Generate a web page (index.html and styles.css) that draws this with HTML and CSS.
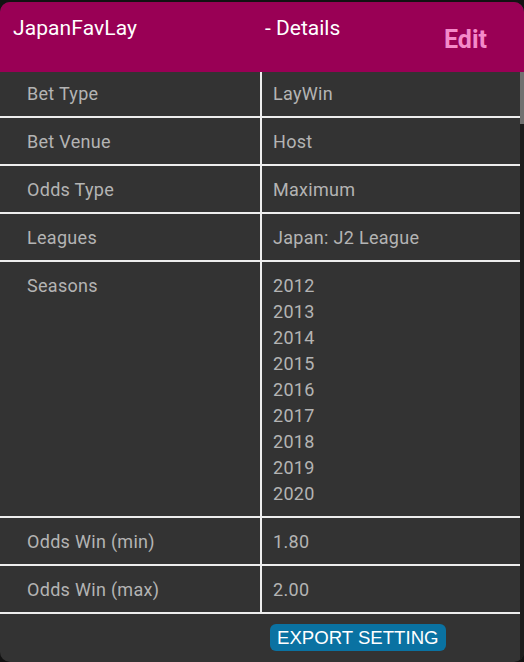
FILE: index.html
```html
<!DOCTYPE html>
<html lang="en">
<head>
  <meta charset="UTF-8" />
  <meta name="viewport" content="width=device-width, initial-scale=1.0"/>
  <title>JapanFavLay - Details</title>
  <link rel="stylesheet" href="styles.css">
</head>
<body>

  <div class="card">
    <!-- Header -->
    <div class="header">
      <div class="title">JapanFavLay</div>
      <div class="subtitle">- Details</div>
      <div class="edit">Edit</div>
    </div>

    <div class="content">
      <div class="table">
        <div class="row first">
          <div class="cell label">Bet Type</div>
          <div class="cell value">LayWin</div>
        </div>
        <div class="row">
          <div class="cell label">Bet Venue</div>
          <div class="cell value">Host</div>
        </div>
        <div class="row">
          <div class="cell label">Odds Type</div>
          <div class="cell value">Maximum</div>
        </div>
        <div class="row">
          <div class="cell label">Leagues</div>
          <div class="cell value">Japan: J2 League</div>
        </div>
        <div class="row">
          <div class="cell label">Seasons</div>
          <div class="cell value">
            <div>2012</div>
            <div>2013</div>
            <div>2014</div>
            <div>2015</div>
            <div>2016</div>
            <div>2017</div>
            <div>2018</div>
            <div>2019</div>
            <div>2020</div>
          </div>
        </div>
        <div class="row">
          <div class="cell label">Odds Win (min)</div>
          <div class="cell value">1.80</div>
        </div>
        <div class="row">
          <div class="cell label">Odds Win (max)</div>
          <div class="cell value">2.00</div>
        </div>

        <div class="footer">
          <button class="export-btn">EXPORT SETTING</button>
        </div>
      </div>

      <div class="scrollbar">
        <div class="thumb"></div>
      </div>
    </div>
  </div>

</body>
</html>
```

FILE: styles.css
```css
body {
  margin: 0;
  padding: 0;
  background-color: #121212;
  font-family: Roboto, "Noto Sans", sans-serif;
  height: 662px;
  overflow: hidden;
}

.card {
  margin-top: 2px;
  height: 660px;
  background-color: #333333;
  border-radius: 10px;
  overflow: hidden;
  display: flex;
  flex-direction: column;
}

/* Header */
.header {
  height: 70px;
  background-color: #990055;
  display: grid;
  grid-template-columns: 265px 1fr auto;
  color: #ffffff;
  font-size: 21px;
  flex-shrink: 0;
}

.title {
  padding: 14px 0 0 13px;
  letter-spacing: 0.1px;
}

.subtitle {
  padding-top: 14px;
}

.edit {
  padding: 23px 37px 0 0;
  color: #f48ac9;
  font-weight: bold;
  font-size: 25px;
  line-height: normal;
}

/* Table */
.content {
  flex: 1;
  display: flex;
}

.table {
  flex: 1;
}

.row {
  display: grid;
  grid-template-columns: 262px 1fr;
  border-bottom: 2px solid #eeeeee;
}

.cell {
  padding-top: 11px;
  padding-bottom: 9px;
  line-height: 26px;
  font-size: 18px;
  letter-spacing: 0.3px;
  color: #b4b4b4;
}

.row.first .cell {
  padding-top: 9px;
  padding-bottom: 9px;
}

.label {
  padding-left: 27px;
  border-right: 2px solid #eeeeee;
}

.value {
  padding-left: 11px;
}

.footer {
  padding: 10px 0 10px 270px;
}

.export-btn {
  background-color: #0a72a2;
  color: #ffffff;
  border: none;
  border-radius: 6px;
  height: 27px;
  padding: 0 7px;
  font-family: "Liberation Sans", Arial, sans-serif;
  font-size: 18.6px;
  cursor: pointer;
}

.scrollbar {
  width: 4px;
  background-color: #1c1c1c;
}

.thumb {
  height: 52px;
  background-color: #707070;
}
```
